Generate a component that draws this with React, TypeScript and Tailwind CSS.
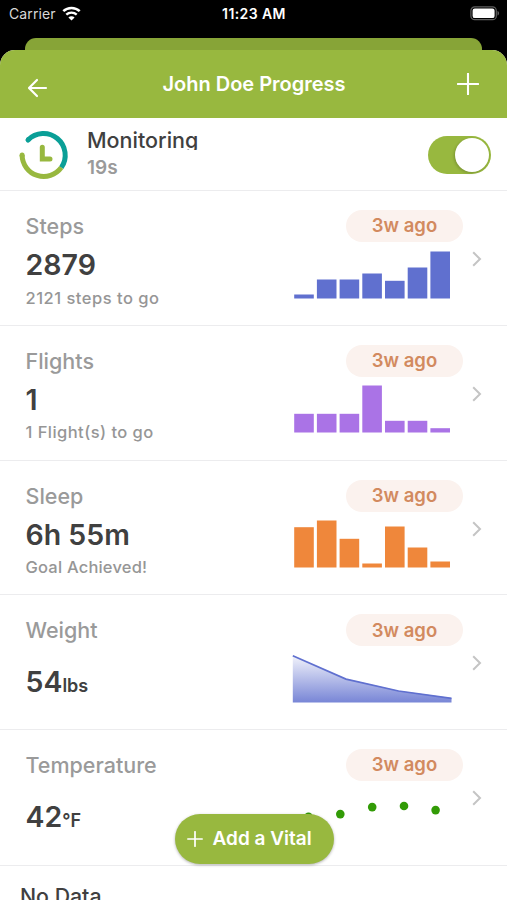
type ChartProps = { values: number[]; color: string };

type Vital = {
  name: string;
  value: string;
  unit?: string;
  note?: string;
  noteSpacing?: string;
  height?: string;
  chart: React.ReactNode;
};

function BarChart({ values, color }: ChartProps) {
  return (
    <svg width="160" height="48" viewBox="0 0 160 48">
      {values.map((h, i) => (
        <rect key={i} x={2.2 + i * 22.7} y={47.5 - h} width="19.6" height={h} fill={color} />
      ))}
    </svg>
  );
}

function AreaChart() {
  return (
    <svg width="160" height="48" viewBox="0 0 160 48">
      <defs>
        <linearGradient id="weight" x1="0" y1="0" x2="0" y2="1">
          <stop offset="0" stopColor="#6070cf" stopOpacity="0.08" />
          <stop offset="1" stopColor="#6070cf" stopOpacity="0.85" />
        </linearGradient>
      </defs>
      <path d="M0.8 0.5L54 23.8L106.5 35.7L159.5 43V47.5H0.8Z" fill="url(#weight)" />
      <path d="M0.8 0.8L54 24.1L106.5 36L159.5 43.3" fill="none" stroke="#6070cf" strokeWidth="1.7" />
    </svg>
  );
}

function DotChart() {
  const points = [[16.5, 26.8], [48.3, 24.1], [80.2, 17.1], [112, 16], [143.6, 20.1]];
  return (
    <svg width="160" height="48" viewBox="0 0 160 48">
      {points.map(([x, y]) => (
        <circle key={x} cx={x} cy={y} r="4.3" fill="#329b06" />
      ))}
    </svg>
  );
}

const vitals: Vital[] = [
  {
    name: 'Steps',
    value: '2879',
    note: '2121 steps to go',
    noteSpacing: 'tracking-[0.5px]',
    chart: <BarChart color="#6070cf" values={[4, 19, 19, 25, 17.7, 31, 47]} />,
  },
  {
    name: 'Flights',
    value: '1',
    note: '1 Flight(s) to go',
    noteSpacing: 'tracking-[0.45px]',
    chart: <BarChart color="#aa73e6" values={[18.7, 18.7, 18.7, 47, 11.7, 11.7, 4.3]} />,
  },
  {
    name: 'Sleep',
    value: '6h 55m',
    note: 'Goal Achieved!',
    noteSpacing: 'tracking-[0.2px]',
    chart: <BarChart color="#ef873b" values={[40.3, 47, 28.7, 4, 41, 20, 6]} />,
  },
  { name: 'Weight', value: '54', unit: 'lbs', chart: <AreaChart /> },
  { name: 'Temperature', value: '42', unit: '°F', height: 'h-[136px]', chart: <DotChart /> },
];

function StatusBar() {
  return (
    <div className="h-[38px] grid grid-cols-3 items-start pl-[9px] pr-[7px] text-white">
      <div className="flex items-center pt-[4px]">
        <span className="text-[14px] leading-5 tracking-[0.1px] text-[#d8d8d8]">Carrier</span>
        <svg className="ml-[6px] mb-[2px]" width="19" height="15" viewBox="0 0 19 15">
          <path d="M1.3 5.2C5.8 0.8 13.2 0.8 17.7 5.2" fill="none" stroke="white" strokeWidth="2.5" />
          <path d="M4.3 8.6C7.2 5.9 11.8 5.9 14.7 8.6" fill="none" stroke="white" strokeWidth="2.4" />
          <path d="M9.5 14.5L6.4 11.4C8 9.9 11 9.9 12.6 11.4Z" fill="white" />
        </svg>
      </div>
      <span className="pt-[4px] -ml-[1px] text-center text-[14px] leading-5 tracking-[0.4px] font-semibold whitespace-nowrap">11:23 AM</span>
      <svg className="justify-self-end mt-[6px]" width="31" height="15" viewBox="0 0 31 15">
        <rect x="1.9" y="0.9" width="25.4" height="12.8" rx="3.8" fill="none" stroke="#5f5f5f" strokeWidth="1.2" />
        <rect x="3.6" y="2.5" width="22" height="9.6" rx="2.2" fill="white" />
        <path d="M28.5 5C30.6 5.7 30.6 8.8 28.5 9.5Z" fill="#5f5f5f" />
      </svg>
    </div>
  );
}

function VitalRow({ name, value, unit, note, noteSpacing, height = 'h-[134.8px]', chart }: Vital) {
  return (
    <div className={`${height} flex border-b border-[#ececee] pl-[25.5px] pr-[25px]`}>
      <div className="flex-1 pt-[20px]">
        <div className="text-[21.5px] leading-[30px] font-medium text-[#9a9a9a]">{name}</div>
        <div className={`leading-[36px] font-semibold text-[#404040] ${note ? 'mt-[6px]' : 'mt-[19px]'}`}>
          <span className="text-[28.5px]">{value}</span>
          {unit && <span className="text-[18px]">{unit}</span>}
        </div>
        {note && (
          <div className={`-mt-[0.5px] text-[16.5px] leading-[22px] font-medium text-[#969696] ${noteSpacing}`}>{note}</div>
        )}
      </div>
      <div className="w-[171px] pt-[19px] flex flex-col">
        <div className="self-end w-[117px] h-[32px] rounded-full bg-[#fbf2ee] flex items-center justify-center text-[18.5px] font-semibold text-[#d28a5f]">
          3w ago
        </div>
        <div className="mt-[8.5px]">{chart}</div>
      </div>
      <svg className="ml-[9px] mt-[60px] shrink-0" width="10" height="16" viewBox="0 0 10 16">
        <path d="M1.2 1.3L8 8L1.2 14.7" fill="none" stroke="#c4c4c4" strokeWidth="2" />
      </svg>
    </div>
  );
}

export default function App() {
  return (
    <div className="relative w-[507px] h-[900px] overflow-hidden bg-black font-['Inter',sans-serif]">
      <StatusBar />
      <div className="mx-[25px] h-[12px] rounded-t-[11px] bg-[#87a437]" />
      <div className="rounded-t-[15px] h-[850px] bg-white overflow-hidden">
        <header className="h-[68px] bg-[#98b83f] text-white flex items-center justify-between pl-[27px] pr-[28px]">
          <svg className="mt-[7px]" width="21" height="20" viewBox="0 0 21 20">
            <path d="M19 10H2.5M10 2L2 10L10 18" fill="none" stroke="white" strokeWidth="2.2" strokeLinecap="round" strokeLinejoin="round" />
          </svg>
          <h1 className="ml-[3px] text-[20px] font-semibold">John Doe Progress</h1>
          <svg width="22" height="22" viewBox="0 0 22 22">
            <path d="M11 0.8V21.2M0.8 11H21.2" fill="none" stroke="white" strokeWidth="2.1" strokeLinecap="round" />
          </svg>
        </header>

        {/* Monitoring toggle */}
        <section className="h-[73px] border-b border-[#ececee] flex pl-[19px] pr-[16px]">
          <svg className="mt-[12px]" width="50" height="50" viewBox="0 0 50 50">
            <path d="M9 10A21.7 21.7 0 0 1 42.3 37.6" fill="none" stroke="#0a9f97" strokeWidth="5" />
            <path d="M9 10L9.4 9.6" stroke="#0a9f97" strokeWidth="5" strokeLinecap="round" />
            <path d="M42.3 37.6A21.7 21.7 0 0 1 3.1 25" fill="none" stroke="#98b83f" strokeWidth="5" />
            <path d="M3.1 25.4V25" stroke="#98b83f" strokeWidth="5" strokeLinecap="round" />
            <path d="M23.3 17.3V28.9H31" fill="none" stroke="#98b83f" strokeWidth="5" strokeLinecap="round" />
          </svg>
          <div className="flex-1 pl-[18px] pt-[9px]">
            <div className="h-[23px] overflow-hidden text-[21.5px] leading-[26px] font-medium text-[#404040]">Monitoring</div>
            <div className="mt-[5px] text-[19px] leading-[26px] font-semibold text-[#9a9a9a]">19s</div>
          </div>
          <div className="mt-[18px] w-[63px] h-[38px] rounded-full bg-[#98b83f] p-[2px] flex justify-end">
            <div className="size-[34px] rounded-full bg-white shadow-[-1px_1px_3px_rgba(0,0,0,0.2)]" />
          </div>
        </section>

        {vitals.map((v) => (
          <VitalRow key={v.name} {...v} />
        ))}

        <div className="pl-[20px] pt-[15px] text-[21.3px] leading-[30px] font-medium text-[#404040]">No Data</div>
      </div>

      {/* Floating action over the list */}
      <button className="absolute left-[174.5px] top-[814px] w-[159px] h-[50px] rounded-full bg-[#98b83f] text-white shadow-[0_1px_3px_rgba(0,0,0,0.3)] flex items-center pl-[12px]">
        <svg width="16" height="16" viewBox="0 0 16 16">
          <path d="M8 0.8V15.2M0.8 8H15.2" stroke="white" strokeWidth="1.7" strokeLinecap="round" />
        </svg>
        <span className="ml-[10px] mt-[1px] text-[19px] font-semibold whitespace-nowrap">Add a Vital</span>
      </button>
    </div>
  );
}
